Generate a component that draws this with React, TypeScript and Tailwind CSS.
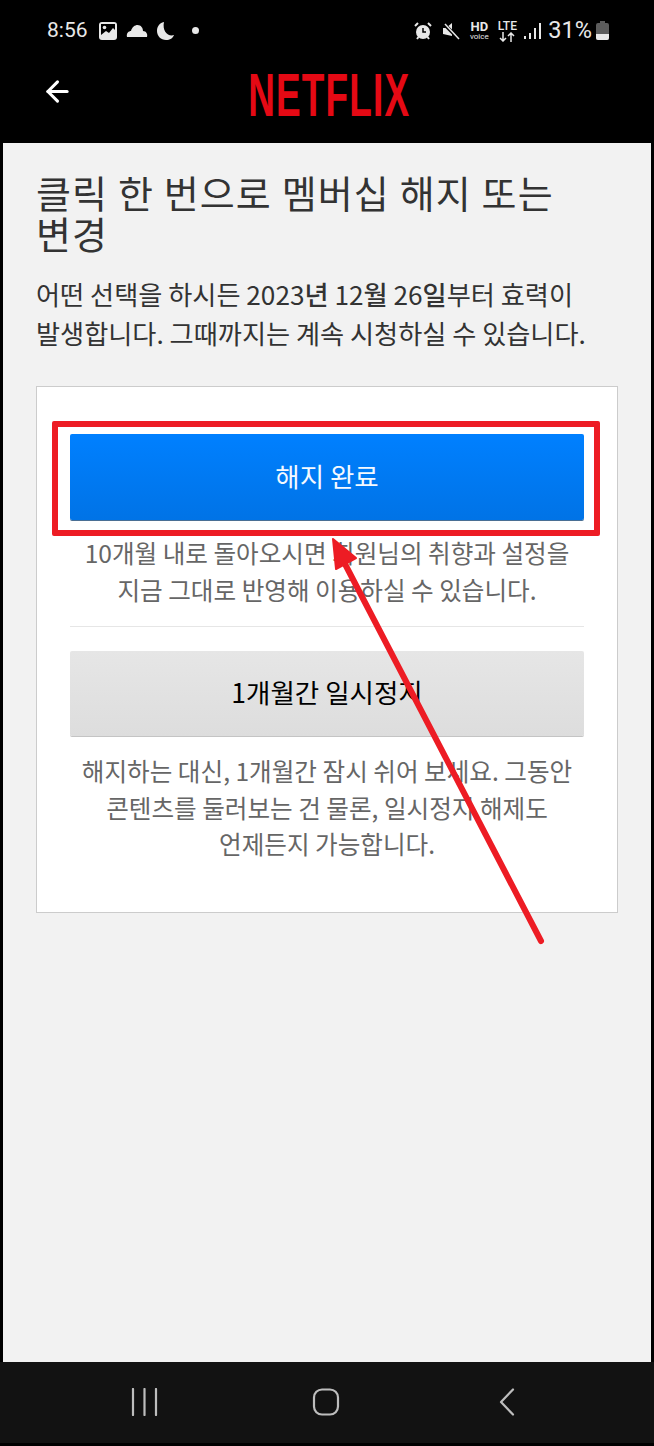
import { ArrowLeft } from 'lucide-react';

function StatusBar() {
    return (
        <div className="flex h-[60px] items-center justify-between pl-[47px] pr-[45px] pt-[1px] text-[#e8e8e8]">
            <div className="flex items-center">
                <span className="text-[21px] leading-none font-['Roboto',sans-serif]">8:56</span>
                <svg className="ml-[10px]" width="20" height="20" viewBox="0 0 20 20">
                    <rect x="1" y="1" width="18" height="18" rx="3" fill="#e8e8e8" />
                    <rect x="3" y="3" width="14" height="14" fill="#000" />
                    <circle cx="6.5" cy="6.5" r="1.8" fill="#e8e8e8" />
                    <path d="M3 14 L8 10 L11 12 L15 7 L17 9 V17 H3 Z" fill="#e8e8e8" />
                </svg>
                <svg className="ml-[8px]" width="22" height="14" viewBox="0 0 22 14">
                    <path d="M1 13 C0 9 3 7 5 7 C6 3 9 1 11.500 1 C15 1 17 4 17 7 C20 7 22 10 21 13 Z" fill="#e8e8e8" />
                </svg>
                <svg className="ml-[8px]" width="20" height="20" viewBox="0 0 20 20">
                    <path d="M8 1 C3 2 1 6 1 10 C1 15 5 19 10 19 C14 19 17 17 18 14 C12 16 6 10 8 1 Z" fill="#e8e8e8" />
                </svg>
                <span className="ml-[16px] h-[7px] w-[7px] rounded-full bg-[#e8e8e8]" />
            </div>
            <div className="flex items-center">
                <svg width="18" height="18" viewBox="0 0 18 18">
                    <circle cx="9" cy="10" r="7" fill="#e8e8e8" />
                    <path d="M9 6 V10 H12" stroke="#000" strokeWidth="1.500" fill="none" />
                    <path d="M1 4 L4 1 M17 4 L14 1 M3 17 L4.500 15 M15 17 L13.500 15" stroke="#e8e8e8" strokeWidth="2" />
                </svg>
                <svg className="ml-[10px]" width="18" height="18" viewBox="0 0 18 18">
                    <path d="M1 6 H4 L10 1 V14 L1 12 Z" fill="#e8e8e8" />
                    <path d="M1 1 L17 17" stroke="#000" strokeWidth="3.500" />
                    <path d="M3 2 L17 17" stroke="#e8e8e8" strokeWidth="1.500" />
                </svg>
                <div className="ml-[9px] flex w-[20px] flex-col items-center font-['Roboto',sans-serif] font-bold">
                    <span className="text-[13px] leading-[13px]">HD</span>
                    <span className="text-[8px] leading-[8px] font-normal">voice</span>
                </div>
                <div className="ml-[8px] flex w-[20px] flex-col items-center font-['Roboto',sans-serif]">
                    <span className="text-[12px] leading-[12px] font-medium">LTE</span>
                    <svg width="16" height="10" viewBox="0 0 16 10">
                        <path d="M4 0 V9 M1 6 L4 9 L7 6 M12 10 V1 M9 4 L12 1 L15 4" stroke="#e8e8e8" strokeWidth="1.500" fill="none" />
                    </svg>
                </div>
                <svg className="ml-[7px]" width="17" height="18" viewBox="0 0 17 18">
                    <rect x="0" y="14" width="2" height="3" fill="#e8e8e8" />
                    <rect x="5" y="11" width="2" height="6" fill="#e8e8e8" />
                    <rect x="10" y="6" width="2" height="11" fill="#e8e8e8" />
                    <rect x="15" y="1" width="2" height="16" fill="#e8e8e8" />
                </svg>
                <span className="ml-[7px] text-[23.5px] leading-none font-['Roboto',sans-serif]">31%</span>
                <svg className="ml-[4px]" width="13" height="19" viewBox="0 0 13 19">
                    <path d="M4 0 H9 V2 H11 Q13 2 13 4 V17 Q13 19 11 19 H2 Q0 19 0 17 V4 Q0 2 2 2 H4 Z" fill="#5c5c5c" />
                    <path d="M0 13 H13 V17 Q13 19 11 19 H2 Q0 19 0 17 Z" fill="#e8e8e8" />
                </svg>
            </div>
        </div>
    );
}

function NavBar() {
    return (
        <div className="flex h-[81px] items-center bg-[#121212]">
            <div className="flex w-full items-center pl-[131px] pb-[1px]">
                <svg width="27" height="28" viewBox="0 0 27 28">
                    <path d="M2 1 V27 M13.500 1 V27 M25 1 V27" stroke="#bdbdbd" strokeWidth="2.200" strokeLinecap="round" fill="none" />
                </svg>
                <svg className="ml-[154px]" width="28" height="28" viewBox="0 0 28 28">
                    <rect x="2" y="1.500" width="24" height="25" rx="8" stroke="#bdbdbd" strokeWidth="2.200" fill="none" />
                </svg>
                <svg className="ml-[159px]" width="16" height="28" viewBox="0 0 16 28">
                    <path d="M14 1.500 L2 14 L14 26.500" stroke="#bdbdbd" strokeWidth="2.200" strokeLinecap="round" strokeLinejoin="round" fill="none" />
                </svg>
            </div>
        </div>
    );
}

export default function App() {
    return (
        <div className="relative flex h-[1446px] w-[654px] flex-col overflow-hidden bg-black font-['Noto_Sans_CJK_KR',sans-serif]">
            <StatusBar />

            {/* Netflix header */}
            <div className="relative flex h-[83px] items-center justify-center">
                <ArrowLeft className="absolute left-[41px] top-[15px] text-white" size={33} strokeWidth={2.200} />
                <span className="ml-[4px] mt-[-11px] inline-block origin-center scale-x-[0.77] scale-y-[1.26] font-['Liberation_Sans',sans-serif] text-[48px] leading-none font-bold tracking-[1.5px] text-[#e50914]">
                    NETFLIX
                </span>
            </div>

            {/* Page body */}
            <div className="mx-[3px] flex-1 bg-[#f2f2f2] px-[33px] pt-[28px]">
                <h1 className="text-[38px] leading-[41px] font-normal tracking-[1.15px] text-[#333]">
                    클릭 한 번으로 멤버십 해지 또는
                    <br />
                    변경
                </h1>
                <p className="mt-[22px] text-[26.2px] leading-[39px] text-[#333]">
                    어떤 선택을 하시든 2023<span className="font-medium">년</span> 12<span className="font-medium">월</span> 26<span className="font-medium">일</span>부터 효력이
                    <br />
                    발생합니다. 그때까지는 계속 시청하실 수 있습니다.
                </p>

                <div className="mt-[33px] h-[527px] border border-[#cccccc] bg-white px-[33px] pt-[47px]">
                    <button className="flex h-[86px] w-full items-center justify-center rounded-[2px] bg-gradient-to-b from-[#0080ff] to-[#0073e6] pb-[3px] text-[26.5px] text-[#f4f9ff] shadow-[0_1px_0_#4a6f94]">
                        해지 완료
                    </button>
                    <p className="mt-[14px] text-center text-[24.6px] leading-[37px] text-[#666]">
                        10개월 내로 돌아오시면 회원님의 취향과 설정을
                        <br />
                        지금 그대로 반영해 이용하실 수 있습니다.
                    </p>
                    <div className="mt-[18px] h-px bg-[#e6e6e6]" />
                    <button className="mt-[24px] flex h-[85px] w-full items-center justify-center rounded-[2px] bg-gradient-to-b from-[#e6e6e6] to-[#dddddd] pb-[4px] text-[26.5px] text-black shadow-[0_1px_0_#c4c4c4]">
                        1개월간 일시정지
                    </button>
                    <p className="mt-[16px] text-center text-[24.6px] leading-[36.500px] text-[#666]">
                        해지하는 대신, 1개월간 잠시 쉬어 보세요. 그동안
                        <br />
                        콘텐츠를 둘러보는 건 물론, 일시정지 해제도
                        <br />
                        언제든지 가능합니다.
                    </p>
                </div>
            </div>

            <NavBar />
            <div className="h-[3px]" />

            {/* Red annotation drawn over the screenshot */}
            <div className="absolute left-[52px] top-[421px] h-[115px] w-[548px] rounded-[2px] border-[6px] border-[#ed1c24]" />
            <svg className="absolute left-0 top-0" width="654" height="1446" viewBox="0 0 654 1446">
                <path d="M541 941 L345 564" stroke="#ed1c24" strokeWidth="6" strokeLinecap="round" fill="none" />
                <path d="M333 539 L356 558 L336 569 Z" fill="#ed1c24" stroke="#ed1c24" strokeWidth="2" strokeLinejoin="round" />
            </svg>
        </div>
    );
}
